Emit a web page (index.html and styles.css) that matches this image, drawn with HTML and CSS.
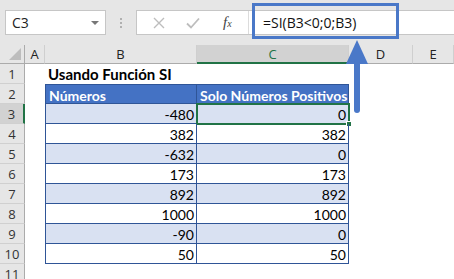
FILE: index.html
```html
<!DOCTYPE html>
<html>
    <head>
        <meta charset="utf-8">
        <title>Usando Función SI</title>
        <link rel="stylesheet" href="styles.css">
    </head>
    <body>
        <div class="sheet">
            <!-- name box + formula bar -->
            <div class="toolbar">
                <div class="namebox">
                    <span>C3</span>
                    <span class="drop"></span>
                </div>
                <div class="grip"><i></i><i></i><i></i></div>
                <div class="formula">
                    <div class="fbuttons">
                        <svg width="12" height="12" viewBox="0 0 12 12"><path d="M1 1L11 11M11 1L1 11" stroke="#bdbdbd" stroke-width="1.4" fill="none"/></svg>
                        <svg width="14" height="12" viewBox="0 0 14 12"><path d="M1 6.5L5 10.5L13 1.5" stroke="#bdbdbd" stroke-width="1.8" fill="none"/></svg>
                        <span class="fx">f<sub>x</sub></span>
                    </div>
                    <div class="ftext">=SI(B3&lt;0;0;B3)</div>
                </div>
            </div>

            <div class="grid">
                <div class="corner"></div>
                <div class="colhead">A</div>
                <div class="colhead">B</div>
                <div class="colhead active">C</div>
                <div class="colhead">D</div>
                <div class="colhead">E</div>
            </div>
            <div class="grid" id="rows"></div>

            <!-- callout over the formula -->
            <div class="callout"></div>
            <div class="arrow">
                <svg width="22" height="74" viewBox="0 0 22 74">
                    <path d="M11 0L22 24H0Z" fill="#4a78c8"/>
                    <rect x="8" y="20" width="6" height="53" rx="3" fill="#4a78c8"/>
                </svg>
            </div>
        </div>
        <script>
        var data = [-480, 382, -632, 173, 892, 1000, -90, 50];
        var rows = document.getElementById('rows');
        var html = '';

        // row 1: title, row 2: table header
        html += '<div class="rowhead">1</div><div class="cell"></div><div class="cell title">Usando Función SI</div><div class="cell"></div><div class="cell"></div><div class="cell"></div>';
        html += '<div class="rowhead">2</div><div class="cell"></div><div class="cell th first">Números</div><div class="cell th">Solo Números Positivos</div><div class="cell"></div><div class="cell"></div>';

        data.forEach(function(n, i) {
            var r = i + 3;
            var band = (i % 2 == 0) ? ' band' : '';
            var pos = n < 0 ? 0 : n;
            var cls = r == 3 ? ' selected' : '';
            html += '<div class="rowhead' + (r == 3 ? ' active' : '') + '">' + r + '</div>';
            html += '<div class="cell"></div>';
            html += '<div class="cell td first' + band + '">' + n + '</div>';
            html += '<div class="cell td' + band + cls + '">' + pos + '</div>';
            html += '<div class="cell"></div><div class="cell"></div>';
        });
        html += '<div class="rowhead">11</div><div class="cell"></div><div class="cell"></div><div class="cell"></div><div class="cell"></div><div class="cell"></div>';
        rows.innerHTML = html;
        </script>
    </body>
</html>
```

FILE: styles.css
```css
*, ::after, ::before {
    box-sizing: border-box;
}
body {
    margin: 0;
    width: 454px;
    height: 279px;
    overflow: hidden;
    background: #fff;
    font-family: "Lato", "Open Sans", sans-serif;
}
.sheet {
    position: relative;
    height: 279px;
    overflow: hidden;
}
.toolbar {
    height: 45px;
    background: #e6e6e6;
    display: flex;
    align-items: flex-start;
    padding: 10px 0 0 5px;
}
.namebox {
    width: 101px;
    height: 25px;
    background: #fff;
    border: 1px solid #c6c6c6;
    display: flex;
    align-items: center;
    justify-content: space-between;
    padding: 0 6px 0 6px;
    font-family: "Open Sans", sans-serif;
    font-size: 14px;
    color: #222;
}
.drop {
    width: 0;
    height: 0;
    border-left: 4px solid transparent;
    border-right: 4px solid transparent;
    border-top: 4px solid #777;
}
.grip {
    width: 30px;
    height: 25px;
    display: flex;
    flex-direction: column;
    align-items: center;
    justify-content: center;
    gap: 2px;
}
.grip i {
    width: 2px;
    height: 2px;
    background: #b0b0b0;
}
.formula {
    flex: 1;
    height: 25px;
    background: #fff;
    border: 1px solid #c6c6c6;
    border-right: none;
    display: flex;
    align-items: center;
}
.fbuttons {
    width: 112px;
    height: 100%;
    display: flex;
    align-items: center;
    padding-left: 16px;
    border-right: 1px solid #dcdcdc;
}
.fbuttons svg:nth-child(2) {
    margin-left: 21px;
}
.fx {
    margin-left: 23px;
    font-family: "Liberation Serif", serif;
    font-style: italic;
    font-size: 15px;
    color: #444;
}
.fx sub {
    font-size: 10px;
    vertical-align: 0;
}
.ftext {
    padding-left: 14px;
    font-family: "Open Sans", sans-serif;
    font-size: 14px;
    color: #111;
}
.grid {
    display: grid;
    grid-template-columns: 25px 20px 152px 152px 64px 1fr;
}
#rows {
    grid-auto-rows: 20px;
}
.corner,
.colhead {
    height: 19px;
    background: #e6e6e6;
    border-bottom: 1px solid #ababab;
}
.corner {
    position: relative;
    border-right: 1px solid #ababab;
}
.corner::after {
    content: "";
    position: absolute;
    right: 3px;
    bottom: 3px;
    border-left: 12px solid transparent;
    border-bottom: 12px solid #bdbdbd;
}
.colhead {
    border-right: 1px solid #cfcfcf;
    text-align: center;
    font-family: "Open Sans", sans-serif;
    font-size: 13px;
    line-height: 19px;
    color: #222;
}
.colhead.active {
    background: #d2d2d2;
    border-bottom: 2px solid #217346;
    color: #217346;
}
.rowhead {
    background: #e6e6e6;
    border-right: 1px solid #ababab;
    border-bottom: 1px solid #d0d0d0;
    text-align: center;
    font-family: "Open Sans", sans-serif;
    font-size: 13px;
    line-height: 20px;
    color: #333;
}
.rowhead.active {
    background: #d2d2d2;
    border-right: 2px solid #217346;
}
.cell {
    font-size: 14px;
    line-height: 19px;
    padding-top: 1px;
    color: #000;
    white-space: nowrap;
    position: relative;
}
.title {
    font-weight: bold;
    font-size: 15px;
    padding-left: 3px;
}
.th {
    background: #4472c4;
    color: #fff;
    font-weight: bold;
    padding-left: 3px;
    border-top: 1px solid #2f5597;
    border-right: 1px solid #2f5597;
    border-bottom: 1px solid #2f5597;
}
.td {
    text-align: right;
    padding-right: 2px;
    border-right: 1px solid #2f5597;
    border-bottom: 1px solid #2f5597;
}
.first {
    border-left: 1px solid #2f5597;
}
.band {
    background: #d9e1f2;
}
.selected {
    outline: 2px solid #217346;
    outline-offset: -1px;
    border-right-color: transparent;
}
.selected::after {
    content: "";
    position: absolute;
    right: -4px;
    bottom: -4px;
    width: 6px;
    height: 6px;
    background: #217346;
    border: 1px solid #fff;
}
.callout {
    position: absolute;
    left: 252px;
    top: 3px;
    width: 147px;
    height: 36px;
    border: 3px solid #4a78c8;
}
.arrow {
    position: absolute;
    left: 346px;
    top: 40px;
    line-height: 0;
}
```
